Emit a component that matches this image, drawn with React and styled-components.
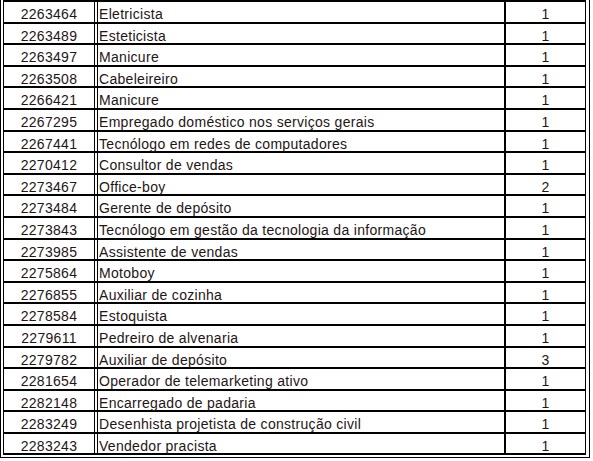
import React from 'react';
import styled, { createGlobalStyle } from 'styled-components';

const rows = [
  ['2263464', 'Eletricista', 1],
  ['2263489', 'Esteticista', 1],
  ['2263497', 'Manicure', 1],
  ['2263508', 'Cabeleireiro', 1],
  ['2266421', 'Manicure', 1],
  ['2267295', 'Empregado doméstico nos serviços gerais', 1],
  ['2267441', 'Tecnólogo em redes de computadores', 1],
  ['2270412', 'Consultor de vendas', 1],
  ['2273467', 'Office-boy', 2],
  ['2273484', 'Gerente de depósito', 1],
  ['2273843', 'Tecnólogo em gestão da tecnologia da informação', 1],
  ['2273985', 'Assistente de vendas', 1],
  ['2275864', 'Motoboy', 1],
  ['2276855', 'Auxiliar de cozinha', 1],
  ['2278584', 'Estoquista', 1],
  ['2279611', 'Pedreiro de alvenaria', 1],
  ['2279782', 'Auxiliar de depósito', 3],
  ['2281654', 'Operador de telemarketing ativo', 1],
  ['2282148', 'Encarregado de padaria', 1],
  ['2283249', 'Desenhista projetista de construção civil', 1],
  ['2283243', 'Vendedor pracista', 1],
];

const GlobalStyle = createGlobalStyle`
  html, body {
    margin: 0;
    padding: 0;
    background: #fff;
  }
  body {
    font-family: "Liberation Sans", Arial, sans-serif;
  }
`;

const Frame = styled.div`
  box-sizing: border-box;
  width: 590px;
  border: 1px solid #000;
  border-top: none;
  padding: 0 3px 2px 2px;
`;

const Table = styled.div`
  border: 1px solid #000;
  border-top-width: 2px;
  border-bottom: none;
`;

const Row = styled.div`
  box-sizing: border-box;
  display: grid;
  grid-template-columns: 94px 408px 79px;
  height: 21.6px;
  border-bottom: 2px solid #000;
`;

const Cell = styled.div`
  box-sizing: border-box;
  font-size: 14px;
  line-height: 16px;
  letter-spacing: 0.3px;
  padding-top: 4px;
  color: #241515;
  white-space: nowrap;
  text-align: ${p => p.$align || 'left'};
  padding-left: ${p => (p.$align === 'left' ? '1px' : '0')};
`;

const CodeCell = styled(Cell)`
  border-right: 4px double #000;
`;

const NameCell = styled(Cell)`
  border-right: 2px solid #000;
`;

export default function App() {
  return (
    <>
      <GlobalStyle />
      <Frame>
        <Table>
          {rows.map(([code, name, qty], i) => (
            <Row key={i}>
              <CodeCell $align="center">{code}</CodeCell>
              <NameCell $align="left">{name}</NameCell>
              <Cell $align="center">{qty}</Cell>
            </Row>
          ))}
        </Table>
      </Frame>
    </>
  );
}
